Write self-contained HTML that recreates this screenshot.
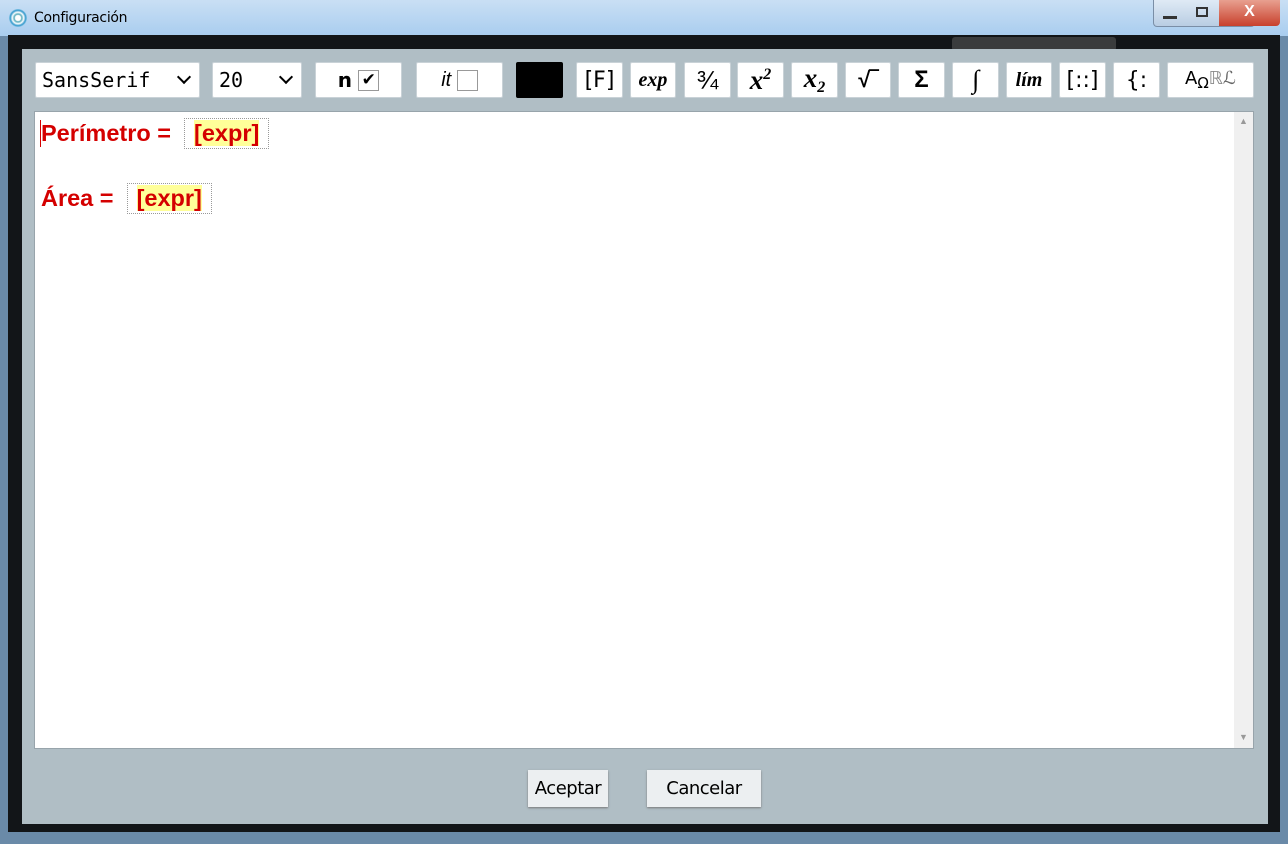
<!DOCTYPE html><html><head><style>
body{margin:0;width:1288px;height:844px;overflow:hidden;position:relative;font-family:"Liberation Sans",sans-serif;background:#6a8aa8}
.abs{position:absolute}
.title{left:0;top:0;width:1288px;height:36px;background:linear-gradient(#c9dff4,#a9cdef);}
.dark{left:8px;top:35px;width:1272px;height:797px;background:#121518}
.panel{left:22px;top:49px;width:1246px;height:775px;background:#b0bec5}
.b{position:absolute;top:62px;height:36px;background:#fff;border:1px solid #c9d2d7;box-sizing:border-box;display:flex;align-items:center;justify-content:center;font-size:22px;color:#000;border-radius:2px}
.ser{font-family:"Liberation Serif",serif;font-style:italic;font-weight:bold}
.ed{left:34px;top:111px;width:1220px;height:638px;background:#fff;border:1px solid #98a4ab;box-sizing:border-box}
.red{color:#d40000;font-weight:bold;font-size:23.5px}
.ex{display:inline-block;border:1px dotted #999;padding:2px 9px;height:31px;box-sizing:border-box;line-height:25px}
.ex span{background:#ffff99}
.btn{top:770px;height:37px;background:#eceff1;box-shadow:0 1px 2px #777;font-family:"DejaVu Sans",sans-serif;font-size:18px;display:flex;align-items:center;justify-content:center;letter-spacing:-0.5px}
.chev{display:inline-block;width:8px;height:8px;border-right:2.5px solid #000;border-bottom:2.5px solid #000;transform:rotate(45deg);margin-top:-6px}
</style></head><body>
<div class="abs title"></div>
<div class="abs" style="left:9px;top:9px;width:18px;height:18px;border-radius:50%;background:radial-gradient(#fff 20%,#5ab 30%,#fff 45%,#39c 60%,#def 80%)"></div>
<div class="abs" style="left:34px;top:10px;font-size:14px;font-family:'DejaVu Sans',sans-serif;color:#000;letter-spacing:-0.3px">Configuración</div>
<div class="abs" style="left:1153px;top:0;width:100px;height:26px;border:1px solid #7a8ea6;border-top:none;border-radius:0 0 4px 4px;background:linear-gradient(#dfeaf5,#b9cde3)"></div>
<div class="abs" style="left:1219px;top:0;width:61px;height:26px;background:linear-gradient(#e8a090,#c8402c);border-radius:0 0 4px 0;color:#fff;font-weight:bold;text-align:center;font-size:16px;line-height:24px">X</div>
<div class="abs" style="left:1163px;top:16px;width:14px;height:3px;background:#333"></div>
<div class="abs" style="left:1196px;top:7px;width:12px;height:10px;border:2px solid #333;box-sizing:border-box"></div>
<div class="abs dark"></div>
<div class="abs" style="left:952px;top:37px;width:164px;height:14px;background:#3a3c3d;border-radius:3px"></div>
<div class="abs panel"></div>
<div class="b" style="left:35px;width:165px;justify-content:space-between;padding:0 10px 0 6px;font-family:'DejaVu Sans Mono',monospace;font-size:20px"><span>SansSerif</span><span class="chev"></span></div>
<div class="b" style="left:212px;width:90px;justify-content:space-between;padding:0 10px 0 6px;font-family:'DejaVu Sans Mono',monospace;font-size:20px"><span>20</span><span class="chev"></span></div>
<div class="b" style="left:315px;width:87px;font-family:'DejaVu Sans',sans-serif;font-size:20px"><span style="font-weight:600">n</span>&nbsp;<span style="display:inline-block;width:19px;height:19px;border:1px solid #999;font-size:17px;line-height:19px;text-align:center">✔</span></div>
<div class="b" style="left:416px;width:87px;font-size:20px"><i>it</i>&nbsp;<span style="display:inline-block;width:19px;height:19px;border:1px solid #999"></span></div>
<div class="b" style="left:516px;width:47px;background:#000;border-color:#000"></div>
<div class="b" style="left:576px;width:47px;font-family:'DejaVu Sans',sans-serif">[F]</div>
<div class="b ser" style="left:630px;width:46px;font-size:20px">exp</div>
<div class="b" style="left:684px;width:47px;font-size:26px">¾</div>
<div class="b ser" style="left:737px;width:47px;font-size:27px"><span>x<span style="font-size:16px;vertical-align:10px">2</span></span></div>
<div class="b ser" style="left:791px;width:47px;font-size:27px"><span>x<span style="font-size:16px;vertical-align:-5px">2</span></span></div>
<div class="b" style="left:845px;width:46px;font-weight:bold">√‾</div>
<div class="b" style="left:898px;width:47px;font-weight:bold;font-size:24px">Σ</div>
<div class="b ser" style="left:952px;width:47px;font-size:26px">∫</div>
<div class="b ser" style="left:1006px;width:46px;font-size:20px">lím</div>
<div class="b" style="left:1059px;width:47px;font-family:'DejaVu Sans',sans-serif">[::]</div>
<div class="b" style="left:1113px;width:47px;font-family:'DejaVu Sans',sans-serif">{:</div>
<div class="b" style="left:1167px;width:87px;font-family:'DejaVu Sans',sans-serif;font-size:18px"><span>A<span style="font-size:15px;vertical-align:-4px">Ω</span><span style="color:#888">ℝ</span><i style="color:#666">ℒ</i></span></div>
<div class="abs ed">
<div class="abs" style="left:1199px;top:0;width:19px;height:636px;background:#f0f0f0"></div>
<div class="abs" style="left:1204px;top:4px;font-size:9px;color:#999">▲</div>
<div class="abs" style="left:1204px;top:620px;font-size:9px;color:#999">▼</div>
<div class="abs" style="left:5px;top:8px;width:1px;height:27px;background:#d40000"></div>
<div class="abs red" style="left:6px;top:6px">Perímetro = &nbsp;<span class="ex"><span>[expr]</span></span></div>
<div class="abs red" style="left:6px;top:71px">Área = &nbsp;<span class="ex"><span>[expr]</span></span></div>
</div>
<div class="abs btn" style="left:528px;width:80px">Aceptar</div>
<div class="abs btn" style="left:647px;width:114px">Cancelar</div>
</body></html>
